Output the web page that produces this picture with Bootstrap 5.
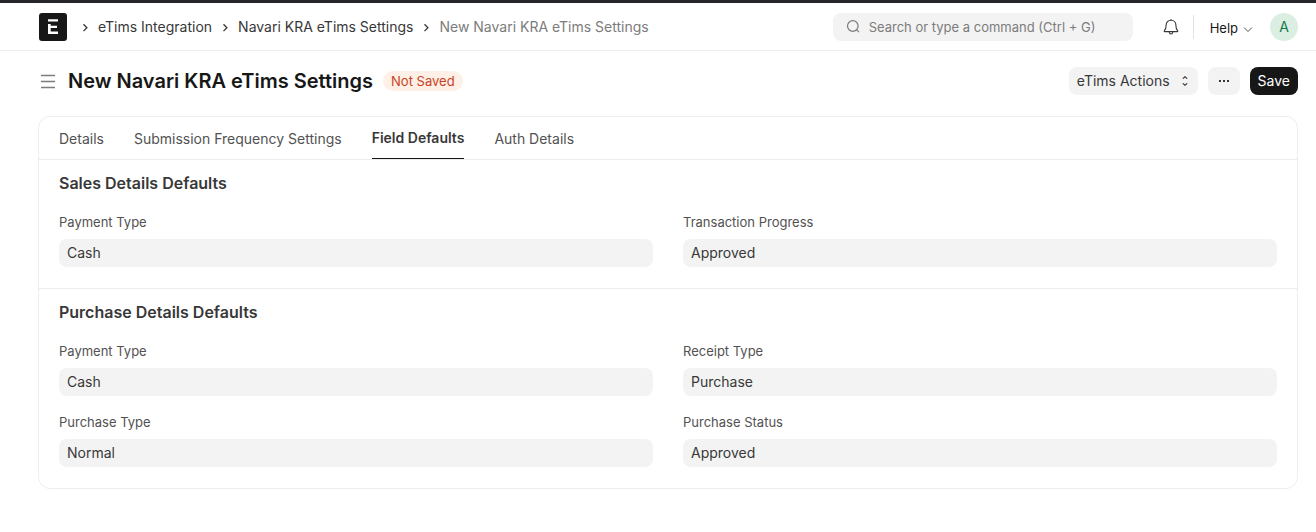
<!DOCTYPE html>
<html lang="en">
<head>
<meta charset="utf-8">
<meta name="viewport" content="width=device-width, initial-scale=1">
<title>New Navari KRA eTims Settings</title>
<link rel="stylesheet" href="https://cdn.jsdelivr.net/npm/bootstrap@5.3.0/dist/css/bootstrap.min.css">
<style>
  :root { --ink: #171717; --text: #383838; --muted: #525252; --faint: #7c7c7c; --control: #f3f3f3; --line: #ededed; }
  body { font-family: Inter, "Liberation Sans", sans-serif; font-size: 14px; line-height: 20px; color: var(--text); background: #fff; }
  a { color: inherit; text-decoration: none; }
  .page-gutter { padding-left: 38px; padding-right: 18px; }
  .app-bar { border-top: 3px solid #28242c; border-bottom: 1px solid var(--line); height: 51px; }
  .crumbs { --bs-breadcrumb-item-active-color: var(--faint); font-size: 14px; gap: 7px; padding-left: 11px; }
  .crumbs .breadcrumb-item { gap: 7px; }
  .crumbs .breadcrumb-item + .breadcrumb-item { padding-left: 0; }
  .crumbs .breadcrumb-item + .breadcrumb-item::before { content: none; }
  .search-box { width: 300px; height: 28px; background: var(--control); border-radius: 8px; padding-left: 13px; }
  .search-box input, .search-box input:focus { background: transparent; font-size: 13px; line-height: 20px; padding: 0 8px; box-shadow: none; }
  .search-box input::placeholder { color: var(--faint); }
  .bar-rule { width: 1px; height: 24px; background: #e2e2e2; }
  .help-btn { font-size: 13px; color: var(--ink); }
  .avatar-btn { width: 28px; height: 28px; background: #daeee1; color: #16794c; font-size: 14px; }
  .page-head { padding-top: 16px; padding-bottom: 21px; }
  .page-title { font-size: 20px; line-height: 28px; font-weight: 600; color: var(--ink); margin: 0 10px; }
  .status-pill { font-size: 13px; line-height: 20px; padding: 0 8px; color: #c7431f; background: #fff0e7; }
  .head-tools { gap: 10px; }
  .tool-btn { --bs-btn-font-size: 14px; --bs-btn-line-height: 20px; --bs-btn-padding-y: 4px; --bs-btn-padding-x: 8px; --bs-btn-border-radius: 8px; --bs-btn-bg: var(--control); --bs-btn-hover-bg: #e8e8e8; --bs-btn-color: var(--text); }
  .tool-btn.save-btn { --bs-btn-bg: var(--ink); --bs-btn-color: #fff; --bs-btn-hover-bg: var(--text); --bs-btn-hover-color: #fff; }
  .menu-btn { gap: 10px; }
  .form-panel { border: 1px solid var(--line); border-radius: 12px; }
  .form-tabs { padding: 0 20px; gap: 30px; border-bottom: 1px solid var(--line); }
  .form-tabs .nav-link { padding: 12px 0 10px; color: var(--muted); font-size: 14px; }
  .form-tabs .nav-link.active { padding: 11px 0 10px; color: var(--text); font-weight: 600; border-bottom: 1px solid var(--ink); }
  .form-block { padding: 11px 20px 21px; }
  .form-block + .form-block { border-top: 1px solid var(--line); }
  .form-block h2 { font-size: 16px; line-height: 24px; font-weight: 600; margin-bottom: 17px; }
  .form-block .row { --bs-gutter-x: 30px; --bs-gutter-y: 16px; }
  .form-block label { font-size: 13px; line-height: 20px; margin-bottom: 7px; color: var(--muted); }
  .form-block .form-control { height: 28px; padding: 3px 8px 5px; border: 0; border-radius: 8px; background: var(--control); color: var(--text); font-size: 14px; line-height: 20px; }
</style>
</head>
<body>
<header class="app-bar page-gutter d-flex align-items-center">
  <a href="#" class="d-flex" aria-label="Home">
    <svg width="30" height="28" viewBox="-1 0 30 28"><rect width="28" height="28" rx="3" fill="#171717"/><path d="M9 6.200h10v2.300H9zM9 11h2.700v1.700H18V15h-6.300v3.600H19V21H9z" fill="#fff"/></svg>
  </a>
  <nav aria-label="breadcrumb">
    <ol class="breadcrumb crumbs mb-0 flex-nowrap text-nowrap">
      <li class="breadcrumb-item d-flex align-items-center"><svg width="12" height="12" viewBox="0 0 12 12" fill="none" stroke="#383838" stroke-width="1.300"><path d="M4.500 3.300L7.900 6.700 4.500 10.100"/></svg><a href="#">eTims Integration</a></li>
      <li class="breadcrumb-item d-flex align-items-center"><svg width="12" height="12" viewBox="0 0 12 12" fill="none" stroke="#383838" stroke-width="1.300"><path d="M4.500 3.300L7.900 6.700 4.500 10.100"/></svg><a href="#">Navari KRA eTims Settings</a></li>
      <li class="breadcrumb-item active d-flex align-items-center" aria-current="page"><svg width="12" height="12" viewBox="0 0 12 12" fill="none" stroke="#383838" stroke-width="1.300"><path d="M4.500 3.300L7.900 6.700 4.500 10.100"/></svg>New Navari KRA eTims Settings</li>
    </ol>
  </nav>
  <div class="ms-auto d-flex align-items-center">
    <div class="search-box d-flex align-items-center">
      <svg class="flex-shrink-0" width="15" height="15" viewBox="0 0 15 15" fill="none" stroke="#7c7c7c" stroke-width="1.200"><circle cx="6.800" cy="7" r="5.300"/><path d="M10.500 10.700l2.500 2.500"/></svg>
      <input class="form-control border-0" type="search" aria-label="Search" placeholder="Search or type a command (Ctrl + G)">
    </div>
    <button type="button" class="btn p-0 border-0 d-flex ms-4 me-2" aria-label="Notifications">
      <svg width="28" height="18" viewBox="-6 0 28 18" fill="none" stroke="#383838" stroke-width="1.100" stroke-linejoin="round"><path d="M8 2.300c-2.900 0-4.900 2-4.900 4.900 0 2.900-.5 4.200-1.700 5.400-.4.500-.2 1 .4 1h12.400c.6 0 .8-.5.4-1-1.200-1.200-1.700-2.500-1.700-5.400 0-2.900-2-4.900-4.900-4.900zM8 1v1.300M6 13.800c.2 1.500 1 2.200 2 2.200s1.800-.7 2-2.200"/></svg>
    </button>
    <div class="bar-rule"></div>
    <button type="button" class="btn help-btn pt-1 pb-0 px-0 border-0 ms-3 d-flex align-items-center gap-1">Help
      <svg width="12" height="12" viewBox="0 0 12 12" fill="none" stroke="#525252"><path d="M2 4.500L6 8.500l4-4"/></svg>
    </button>
    <button type="button" class="btn avatar-btn rounded-circle p-0 border-0 ms-3" aria-label="Account">A</button>
  </div>
</header>

<main class="page-gutter">
  <div class="page-head d-flex align-items-center">
    <button type="button" class="btn p-0 border-0 d-flex" aria-label="Toggle sidebar">
      <svg width="20" height="16" viewBox="0 0 20 16" fill="none" stroke="#7c7c7c" stroke-width="1.400"><path d="M3 2.500h14M3 8.500h14M3 14.500h14"/></svg>
    </button>
    <h1 class="page-title">New Navari KRA eTims Settings</h1>
    <span class="status-pill rounded-pill">Not Saved</span>
    <div class="ms-auto d-flex head-tools">
      <button type="button" class="btn tool-btn menu-btn border-0 d-flex align-items-center">eTims Actions
        <svg width="10" height="12" viewBox="0 0 10 12" fill="none" stroke="#383838" stroke-width="1.200"><path d="M2.800 3.600L5 1.800l2.200 1.800M2.800 8.400L5 10.200l2.200-1.800"/></svg>
      </button>
      <button type="button" class="btn tool-btn border-0 d-flex align-items-center" aria-label="More">
        <svg width="16" height="16" viewBox="0 0 16 16" fill="#383838"><path d="M3 7h2v2H3zM7 7h2v2H7zM11 7h2v2h-2z"/></svg>
      </button>
      <button type="button" class="btn tool-btn save-btn border-0">Save</button>
    </div>
  </div>

  <form class="form-panel">
    <ul class="nav form-tabs">
      <li class="nav-item"><a class="nav-link" href="#">Details</a></li>
      <li class="nav-item"><a class="nav-link" href="#">Submission Frequency Settings</a></li>
      <li class="nav-item"><a class="nav-link active" aria-current="page" href="#">Field Defaults</a></li>
      <li class="nav-item"><a class="nav-link" href="#">Auth Details</a></li>
    </ul>
    <section class="form-block">
      <h2>Sales Details Defaults</h2>
      <div class="row">
        <div class="col-6"><label class="d-block" for="sales-pay">Payment Type</label><input class="form-control" id="sales-pay" type="text" value="Cash"></div>
        <div class="col-6"><label class="d-block" for="sales-progress">Transaction Progress</label><input class="form-control" id="sales-progress" type="text" value="Approved"></div>
      </div>
    </section>
    <section class="form-block">
      <h2>Purchase Details Defaults</h2>
      <div class="row">
        <div class="col-6"><label class="d-block" for="buy-pay">Payment Type</label><input class="form-control" id="buy-pay" type="text" value="Cash"></div>
        <div class="col-6"><label class="d-block" for="buy-receipt">Receipt Type</label><input class="form-control" id="buy-receipt" type="text" value="Purchase"></div>
        <div class="col-6"><label class="d-block" for="buy-type">Purchase Type</label><input class="form-control" id="buy-type" type="text" value="Normal"></div>
        <div class="col-6"><label class="d-block" for="buy-status">Purchase Status</label><input class="form-control" id="buy-status" type="text" value="Approved"></div>
      </div>
    </section>
  </form>
</main>
<script src="https://cdn.jsdelivr.net/npm/bootstrap@5.3.0/dist/js/bootstrap.bundle.min.js"></script>
</body>
</html>
